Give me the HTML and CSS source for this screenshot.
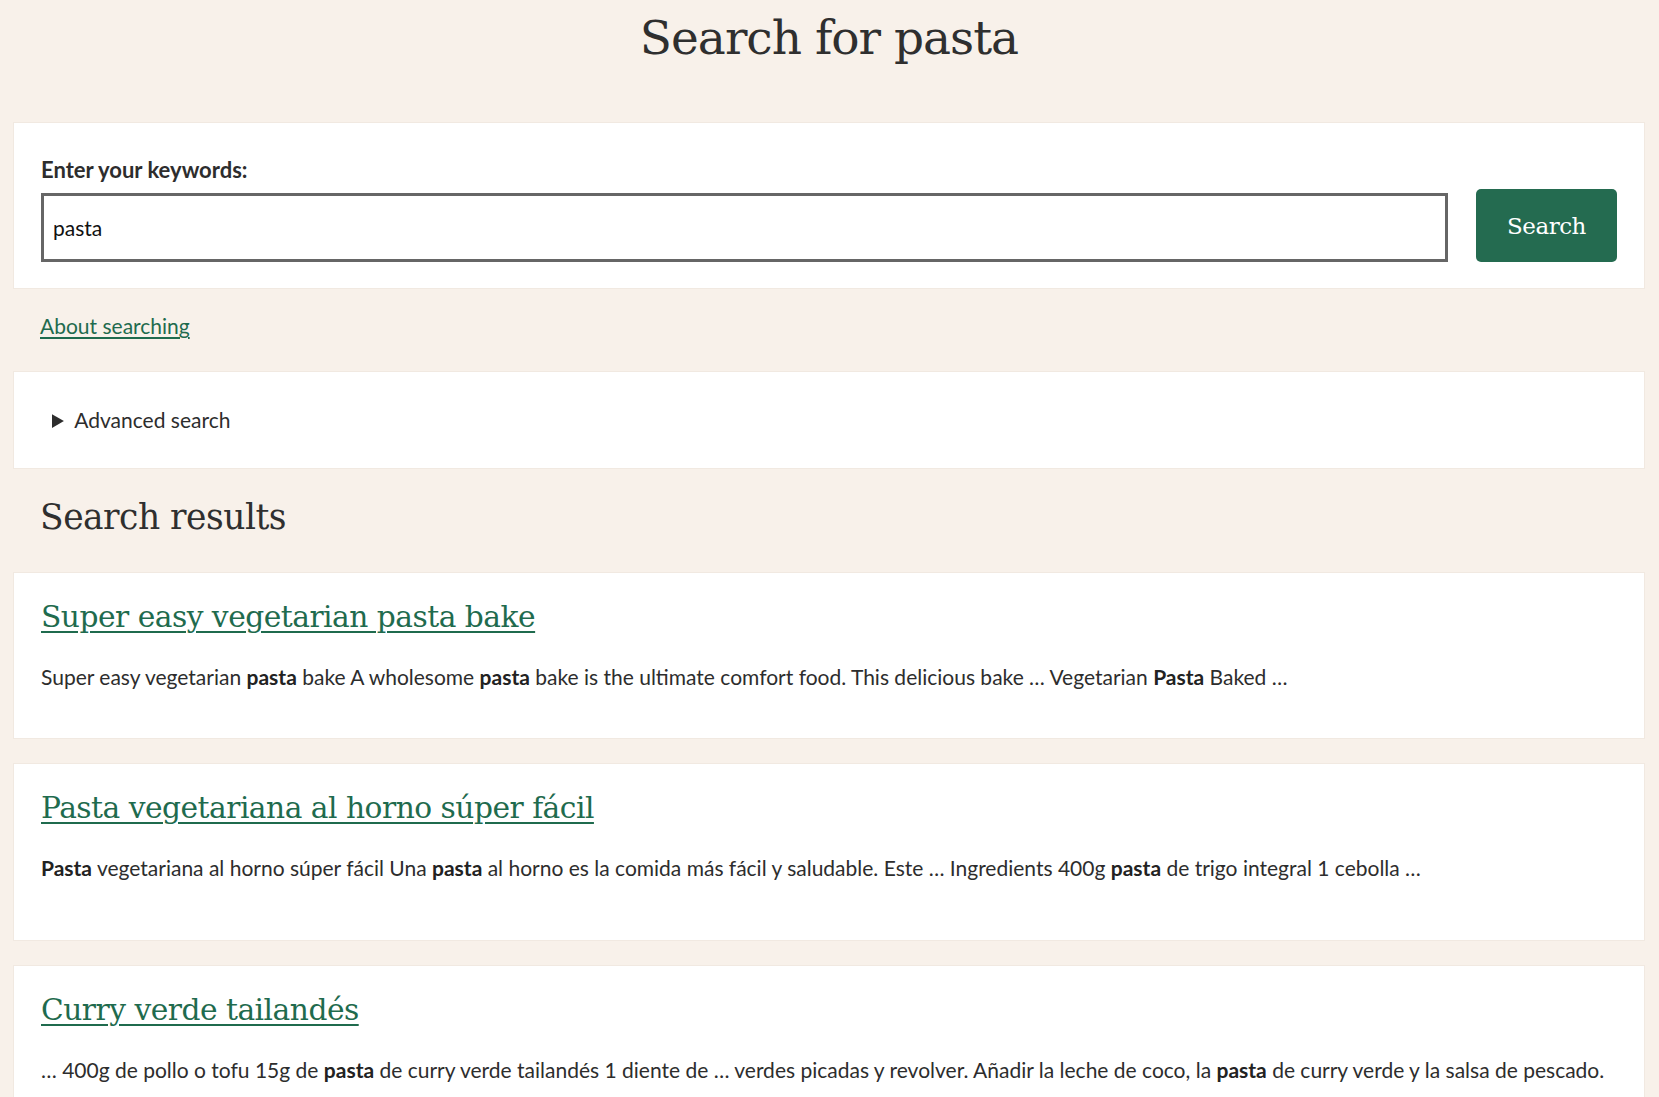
FILE: index.html
```html
<!DOCTYPE html>
<html lang="en">
<head>
<meta charset="utf-8">
<title>Search for pasta</title>
<link rel="stylesheet" href="styles.css">
</head>
<body>
<main class="page">
  <h1 class="page-title">Search for pasta</h1>

  <form class="card search-card">
    <label class="search-label" for="kw">Enter your keywords:</label>
    <div class="search-row">
      <input id="kw" class="search-input" type="text" value="pasta">
      <button class="search-button" type="button">Search</button>
    </div>
  </form>

  <p class="about"><a href="#" class="about-link">About searching</a></p>

  <details class="card advanced">
    <summary class="advanced-summary">Advanced search</summary>
  </details>

  <h2 class="results-title">Search results</h2>

  <ul class="results">
    <li class="card result">
      <a href="#" class="result-title">Super easy vegetarian pasta bake</a>
      <p class="result-snippet">Super easy vegetarian <strong>pasta</strong> bake A wholesome <strong>pasta</strong> bake is the ultimate comfort food. This delicious bake … Vegetarian <strong>Pasta</strong> Baked …</p>
    </li>
    <li class="card result result-tall">
      <a href="#" class="result-title">Pasta vegetariana al horno súper fácil</a>
      <p class="result-snippet"><strong>Pasta</strong> vegetariana al horno súper fácil Una <strong>pasta</strong> al horno es la comida más fácil y saludable. Este … Ingredients 400g <strong>pasta</strong> de trigo integral 1 cebolla …</p>
    </li>
    <li class="card result">
      <a href="#" class="result-title">Curry verde tailandés</a>
      <p class="result-snippet">… 400g de pollo o tofu 15g de <strong>pasta</strong> de curry verde tailandés 1 diente de … verdes picadas y revolver. Añadir la leche de coco, la <strong>pasta</strong> de curry verde y la salsa de pescado.</p>
    </li>
  </ul>
</main>
</body>
</html>
```

FILE: styles.css
```css
* { box-sizing: border-box; }

html, body {
  margin: 0;
  padding: 0;
  background: #f8f1ea;
}

body {
  font-family: "Lato", "Open Sans", sans-serif;
  color: #333;
  font-size: 21px;
}

.page {
  padding: 0 14px 40px 13px;
}

.page-title {
  margin: 0;
  padding-top: 8px;
  height: 122px;
  text-align: center;
  font-family: "DejaVu Serif", serif;
  font-weight: 400;
  font-size: 47px;
  line-height: 60px;
  color: #2f2f2f;
  letter-spacing: -1px;
}

.card {
  background: #fff;
  border: 1px solid #f1e9e1;
}

.search-card {
  margin: 0;
  padding: 34px 27px 26px 27px;
}

.search-label {
  display: block;
  font-weight: 700;
  font-size: 22px;
  line-height: 26px;
  margin-bottom: 6px;
  color: #2d2d2d;
}

.search-row {
  display: flex;
  align-items: flex-end;
  gap: 28px;
}

.search-input {
  flex: 1;
  height: 69px;
  border: 3px solid #666;
  padding: 0 9px;
  font-family: "Lato", sans-serif;
  font-size: 21px;
  color: #111;
  background: #fff;
}

.search-button {
  width: 141px;
  height: 73px;
  background: #246b50;
  color: #fff;
  border: none;
  border-radius: 5px;
  font-family: "DejaVu Serif", serif;
  font-size: 23px;
  letter-spacing: -0.5px;
}

.about {
  margin: 0;
  padding: 24px 0 0 27px;
  height: 82px;
}

.about-link {
  color: #1f6b4e;
  font-size: 21px;
  text-decoration: underline;
  text-decoration-thickness: 2px;
  text-underline-offset: 3px;
}

.advanced {
  height: 98px;
  padding: 35px 0 0 38px;
}

.advanced-summary {
  font-size: 21px;
  line-height: 26px;
  color: #2d2d2d;
  cursor: pointer;
}

.results-title {
  margin: 0;
  padding: 24px 0 0 27px;
  height: 103px;
  font-family: "DejaVu Serif", serif;
  font-weight: 400;
  font-size: 34.5px;
  line-height: 48px;
  color: #2f2f2f;
  letter-spacing: -0.5px;
}

.results {
  list-style: none;
  margin: 0;
  padding: 0;
  display: flex;
  flex-direction: column;
  gap: 24px;
}

.result {
  height: 167px;
  padding: 22px 27px 0 27px;
}

.result-tall {
  height: 178px;
}

.result-title {
  display: inline-block;
  font-family: "DejaVu Serif", serif;
  font-size: 29.7px;
  line-height: 44px;
  color: #1f6b4e;
  letter-spacing: -0.5px;
  text-decoration: underline;
  text-decoration-thickness: 2px;
  text-underline-offset: 4px;
}

.result-snippet {
  margin: 25px 0 0 0;
  font-size: 21px;
  line-height: 26px;
  color: #2d2d2d;
}

.result-snippet strong {
  font-weight: 700;
  color: #222;
}
```
